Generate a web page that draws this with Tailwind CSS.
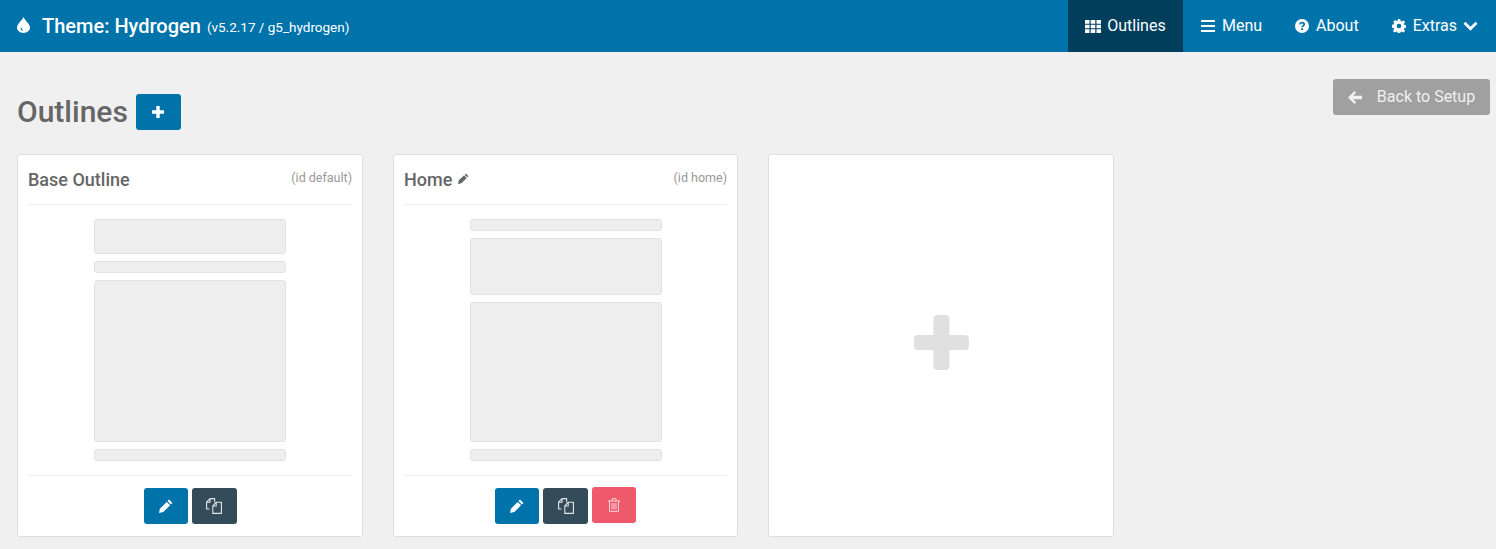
<!DOCTYPE html>
<html lang="en">
<head>
  <meta charset="UTF-8" />
  <title>Theme: Hydrogen</title>
  <script src="https://cdn.jsdelivr.net/npm/@tailwindcss/browser@4"></script>
</head>
<body class="bg-[#f0f0f0] text-[#666] font-['Roboto',sans-serif] h-[549px] overflow-hidden">

  <!-- top bar -->
  <header class="h-[52px] bg-[#0073aa] text-white flex items-center justify-between">
    <div class="flex items-center pl-[17px]">
      <svg class="w-[13px] h-[16px] mb-[3px]" viewBox="0 0 13 16" fill="currentColor"><path fill-rule="evenodd" d="M6.5 0C7.2 2.6 13 7 13 10.6 13 13.7 10.1 16 6.5 16S0 13.7 0 10.6C0 7 5.800 2.600 6.500 0ZM4.300 9.800C3.500 10.800 3.300 12 4.100 12.900 5 13.800 6.400 13.500 6.500 13 5 12.800 4.300 11.700 4.300 9.800Z"/></svg>
      <span class="ml-[12px] text-[20px] font-medium leading-none">Theme: Hydrogen</span>
      <span class="ml-[6px] text-[13.5px] mt-[3px] leading-none">(v5.2.17 / g5_hydrogen)</span>
    </div>
    <nav class="flex h-full text-[16px] pr-[18px]">
      <a class="h-full w-[115px] bg-[#003e5c] flex items-center justify-center gap-[6px]">
        <svg class="w-[16px] h-[13px]" viewBox="0 0 16 13" fill="currentColor"><path d="M0 0h4.500v3.700H0zM5.700 0h4.600v3.700H5.700zM11.500 0H16v3.700h-4.500zM0 4.700h4.500v3.600H0zM5.700 4.700h4.600v3.600H5.700zM11.500 4.700H16v3.600h-4.500zM0 9.300h4.500V13H0zM5.700 9.300h4.600V13H5.700zM11.500 9.300H16V13h-4.500z"/></svg>
        Outlines
      </a>
      <a class="h-full flex items-center gap-[7px] ml-[18px]">
        <svg class="w-[14px] h-[12px]" viewBox="0 0 14 12" fill="currentColor"><path d="M0 0h14v2H0zM0 5h14v2H0zM0 10h14v2H0z"/></svg>
        Menu
      </a>
      <a class="h-full flex items-center gap-[7px] ml-[33px]">
        <svg class="w-[14px] h-[14px]" viewBox="0 0 14 14"><circle cx="7" cy="7" r="7" fill="currentColor"/><path d="M4.800 5.400C5 4.200 5.900 3.600 7 3.600 8.300 3.600 9.200 4.400 9.200 5.400 9.200 6.800 7.100 6.900 7.100 8.300" fill="none" stroke="#0073aa" stroke-width="1.700"/><path d="M6.100 9.300h2v1.700h-2z" fill="#0073aa"/></svg>
        About
      </a>
      <a class="h-full flex items-center gap-[7px] ml-[33px]">
        <svg class="w-[14px] h-[14px]" viewBox="0 0 14 14" fill="currentColor"><path fill-rule="evenodd" d="M5.800 0h2.400l.4 2 1.100.5 1.700-1.100 1.700 1.700-1.200 1.700.5 1.100 2 .4v2.400l-2 .4-.5 1.100 1.200 1.700-1.700 1.700-1.700-1.200-1.100.5-.4 2H5.800l-.4-2-1.100-.5-1.700 1.200-1.700-1.700 1.200-1.700-.5-1.100-2-.4V5.800l2-.4.5-1.100L1.400 2.600l1.700-1.700 1.700 1.200 1.100-.5zM7 4.700a2.300 2.300 0 1 0 0 4.600 2.300 2.300 0 0 0 0-4.600z"/></svg>
        Extras
        <svg class="w-[15px] h-[10px] -ml-[1px]" viewBox="0 0 15 10" fill="none" stroke="currentColor" stroke-width="2.800"><path d="M1.500 1.800l6 6 6-6"/></svg>
      </a>
    </nav>
  </header>

  <main class="px-[17px]">
    <!-- title row -->
    <div class="flex justify-between items-start h-[102px] pr-[-11px]">
      <div class="flex items-center mt-[42px]">
        <h1 class="text-[30px] font-medium leading-[36px] text-[#666]">Outlines</h1>
        <button class="ml-[8px] w-[45px] h-[36px] rounded-[3px] bg-[#0073aa] flex items-center justify-center">
          <svg class="w-[12px] h-[12px]" viewBox="0 0 12 12" fill="#fff"><path d="M4.300 0h3.400v4.300H12v3.400H7.700V12H4.300V7.700H0V4.300h4.300z"/></svg>
        </button>
      </div>
      <button class="mt-[27px] -mr-[11px] w-[157px] h-[36px] rounded-[3px] bg-[#a0a0a0] text-[#f0f0f0] text-[16px] flex items-center justify-center gap-[15px]">
        <svg class="w-[14px] h-[13px]" viewBox="0 0 14 13" fill="currentColor"><path d="M6.500 0l1.700 1.700-3 3H14v3.500H5.200l3 3L6.500 13 0 6.500z"/></svg>
        Back to Setup
      </button>
    </div>

    <!-- outline cards -->
    <div class="flex gap-[30px]">
      <section class="w-[346px] h-[383px] bg-white border border-[#dedede] rounded-[3px] px-[10px]">
        <div class="h-[50px] border-b border-[#eee] flex items-center justify-between">
          <h2 class="text-[18px] font-medium">Base Outline</h2>
          <span class="text-[12.500px] text-[#999] -mt-[2px]">(id default)</span>
        </div>
        <div class="w-[192px] mx-auto pt-[14px] h-[270px] flex flex-col gap-[7px]">
          <div class="h-[35px] bg-[#eee] border border-[#e2e2e2] rounded-[3px]"></div>
          <div class="h-[12px] bg-[#eee] border border-[#e2e2e2] rounded-[3px]"></div>
          <div class="h-[162px] bg-[#eee] border border-[#e2e2e2] rounded-[3px]"></div>
          <div class="h-[12px] bg-[#eee] border border-[#e2e2e2] rounded-[3px]"></div>
        </div>
        <div class="border-t border-[#eee] pt-[12px] flex justify-center gap-[4px]">
          <button class="w-[44px] h-[36px] rounded-[3px] bg-[#0073aa] flex items-center justify-center">
            <svg class="w-[14px] h-[14px]" viewBox="0 0 14 14" fill="#fff"><path d="M10 .6l3.400 3.400-1.500 1.500-3.400-3.400zM7.700 2.900l3.400 3.400-6.800 6.800L0 14l.9-4.300z"/></svg>
          </button>
          <button class="w-[45px] h-[36px] rounded-[3px] bg-[#344b5a] flex items-center justify-center">
            <svg class="w-[16px] h-[16px]" viewBox="0 0 16 16" fill="none" stroke="#dfe5e8" stroke-width="1.100"><path d="M3.500 11H.6V4.200L4 .6h4.600v3.600M4 .6v3.600H.6"/><path d="M6.800 15.400V8l3.400-3.800h5.200v11.200zM10.200 4.200V8H6.800"/></svg>
          </button>
        </div>
      </section>

      <section class="w-[345px] h-[383px] bg-white border border-[#dedede] rounded-[3px] px-[10px]">
        <div class="h-[50px] border-b border-[#eee] flex items-center justify-between">
          <h2 class="text-[18px] font-medium flex items-center gap-[6px]">Home
            <svg class="w-[11px] h-[11px] -mt-[2px]" viewBox="0 0 14 14" fill="#666"><path d="M10 .6l3.400 3.400-1.500 1.500-3.400-3.400zM7.700 2.900l3.400 3.400-6.800 6.800L0 14l.9-4.300z"/></svg>
          </h2>
          <span class="text-[12.500px] text-[#999] -mt-[2px]">(id home)</span>
        </div>
        <div class="w-[192px] mx-auto pt-[14px] h-[270px] flex flex-col gap-[7px]">
          <div class="h-[12px] bg-[#eee] border border-[#e2e2e2] rounded-[3px]"></div>
          <div class="h-[57px] bg-[#eee] border border-[#e2e2e2] rounded-[3px]"></div>
          <div class="h-[140px] bg-[#eee] border border-[#e2e2e2] rounded-[3px]"></div>
          <div class="h-[12px] bg-[#eee] border border-[#e2e2e2] rounded-[3px]"></div>
        </div>
        <div class="border-t border-[#eee] pt-[12px] flex justify-center gap-[4px]">
          <button class="w-[44px] h-[36px] rounded-[3px] bg-[#0073aa] flex items-center justify-center">
            <svg class="w-[14px] h-[14px]" viewBox="0 0 14 14" fill="#fff"><path d="M10 .6l3.400 3.400-1.500 1.500-3.400-3.400zM7.700 2.900l3.400 3.400-6.800 6.800L0 14l.9-4.300z"/></svg>
          </button>
          <button class="w-[45px] h-[36px] rounded-[3px] bg-[#344b5a] flex items-center justify-center">
            <svg class="w-[16px] h-[16px]" viewBox="0 0 16 16" fill="none" stroke="#dfe5e8" stroke-width="1.100"><path d="M3.500 11H.6V4.200L4 .6h4.600v3.600M4 .6v3.600H.6"/><path d="M6.800 15.400V8l3.400-3.800h5.200v11.200zM10.200 4.200V8H6.800"/></svg>
          </button>
          <button class="w-[44px] h-[36px] -mt-[1px] rounded-[3px] bg-[#ee5a6c] flex items-center justify-center">
            <svg class="w-[12px] h-[14px]" viewBox="0 0 12 14" fill="none" stroke="#ffd5da" stroke-width="1"><path d="M0 3h12M4 3V.7h4V3M1.500 3v10.400h9V3M4 5v6.500M6 5v6.500M8 5v6.500"/></svg>
          </button>
        </div>
      </section>

      <section class="w-[346px] h-[383px] bg-white border border-[#dedede] rounded-[3px] flex items-center justify-center">
        <svg class="w-[55px] h-[55px] mt-[-7px]" viewBox="0 0 55 55" fill="#e0e0e0"><path d="M23.500 0h8a4 4 0 0 1 4 4v16h15.500a4 4 0 0 1 4 4v7a4 4 0 0 1-4 4H35.500v16a4 4 0 0 1-4 4h-8a4 4 0 0 1-4-4V35H4a4 4 0 0 1-4-4v-7a4 4 0 0 1 4-4h15.500V4a4 4 0 0 1 4-4z"/></svg>
      </section>
    </div>
  </main>
</body>
</html>
